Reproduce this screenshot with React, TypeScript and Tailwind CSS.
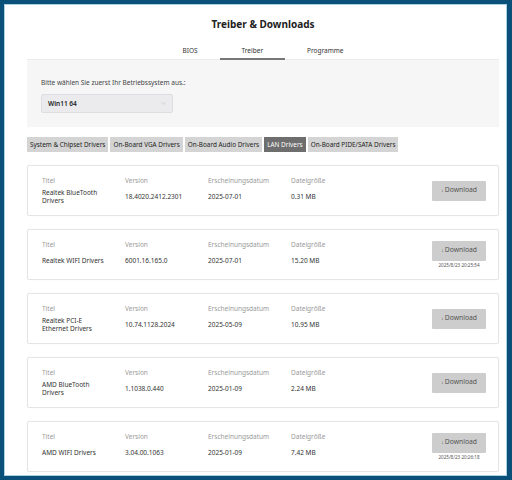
import { ChevronDown } from 'lucide-react';

interface Driver {
  title: string;
  version: string;
  date: string;
  size: string;
  downloaded?: string;
}

const drivers: Driver[] = [
  { title: 'Realtek BlueTooth Drivers', version: '18.4020.2412.2301', date: '2025-07-01', size: '0.31 MB' },
  { title: 'Realtek WIFI Drivers', version: '6001.16.165.0', date: '2025-07-01', size: '15.20 MB', downloaded: '2025/8/23 20:25:54' },
  { title: 'Realtek PCI-E Ethernet Drivers', version: '10.74.1128.2024', date: '2025-05-09', size: '10.95 MB' },
  { title: 'AMD BlueTooth Drivers', version: '1.1038.0.440', date: '2025-01-09', size: '2.24 MB' },
  { title: 'AMD WIFI Drivers', version: '3.04.00.1063', date: '2025-01-09', size: '7.42 MB', downloaded: '2025/8/23 20:26:18' },
];

const categories = [
  'System & Chipset Drivers',
  'On-Board VGA Drivers',
  'On-Board Audio Drivers',
  'LAN Drivers',
  'On-Board PIDE/SATA Drivers',
];

const Field = ({ label, value, wide }: { label: string; value: string; wide?: boolean }) => (
  <div className="w-[83px] shrink-0">
    <div className="text-[6.5px] leading-[9px] text-[#9a9a9a]">{label}</div>
    <div className="mt-[4px] h-[17px] flex items-center">
      <span className={`${wide ? 'max-w-[62px]' : ''} text-[6.5px] leading-[8px] text-[#333]`}>{value}</span>
    </div>
  </div>
);

const DriverCard = ({ driver }: { driver: Driver }) => (
  <div className="h-[51px] border border-[#e4e4e4] rounded-[2px] shadow-[0_0_2px_rgba(0,0,0,0.04)] flex items-center pl-[14px] pr-[12px]">
    <div className="flex">
      <Field label="Titel" value={driver.title} wide />
      <Field label="Version" value={driver.version} />
      <Field label="Erscheinungsdatum" value={driver.date} />
      <Field label="Dateigröße" value={driver.size} />
    </div>
    <div className="ml-auto w-[54px] flex flex-col items-center">
      <button className="w-[54px] h-[20px] bg-[#cdcdcd] rounded-[1px] text-[6.8px] text-[#555] flex items-center justify-center gap-[1px]">
        <span className="text-[5.5px]">↓</span>Download
      </button>
      {driver.downloaded && (
        <div className="mt-[1px] text-[4.6px] leading-[7px] text-[#555] whitespace-nowrap">{driver.downloaded}</div>
      )}
    </div>
  </div>
);

export default function App() {
  return (
    <div
      className="w-[512px] h-[480px] bg-[#0b5078] pt-[4px] pl-[4px] pr-[5px] pb-[4px]"
      style={{ fontFamily: '"Noto Sans", "Open Sans", sans-serif' }}
    >
      <div className="h-full bg-white border border-[#a9d0e4] overflow-hidden pl-[22px] pr-[7px]">
        {/* Header */}
        <h1 className="pt-[12px] text-center text-[10px] leading-[14px] font-bold text-[#222]">
          Treiber &amp; Downloads
        </h1>

        {/* Top tabs */}
        <div className="mt-[13px] flex justify-center border-b border-[#ebebeb]">
          {['BIOS', 'Treiber', 'Programme'].map((t) => (
            <div
              key={t}
              className={`h-[16px] px-[22px] -mb-px flex items-center text-[6.5px] text-[#333] border-b-2 ${
                t === 'Treiber' ? 'border-[#777]' : 'border-transparent'
              }`}
            >
              {t}
            </div>
          ))}
        </div>

        {/* OS select */}
        <div className="bg-[#f6f6f6] pt-[18px] pb-[14px] px-[14px]">
          <div className="text-[6.5px] leading-[10px] text-[#444]">Bitte wählen Sie zuerst Ihr Betriebssystem aus.:</div>
          <div className="mt-[6px] w-[132px] h-[19px] bg-[#ebebee] border border-[#dedee2] rounded-[2px] flex items-center justify-between pl-[6px] pr-[5px]">
            <span className="text-[6.5px] font-semibold text-[#222]">Win11 64</span>
            <ChevronDown size={7} className="text-[#aaa]" strokeWidth={1.5} />
          </div>
        </div>

        {/* Category tabs */}
        <div className="mt-[10px] flex gap-[2px]">
          {categories.map((c) => (
            <div
              key={c}
              className={`h-[15px] px-[3px] flex items-center text-[6.4px] whitespace-nowrap ${
                c === 'LAN Drivers' ? 'bg-[#6e6e6e] text-white' : 'bg-[#d4d4d4] text-[#222]'
              }`}
            >
              {c}
            </div>
          ))}
        </div>

        {/* Driver list */}
        <div className="mt-[13px] flex flex-col gap-[13px]">
          {drivers.map((d) => (
            <DriverCard key={d.title} driver={d} />
          ))}
        </div>
      </div>
    </div>
  );
}
